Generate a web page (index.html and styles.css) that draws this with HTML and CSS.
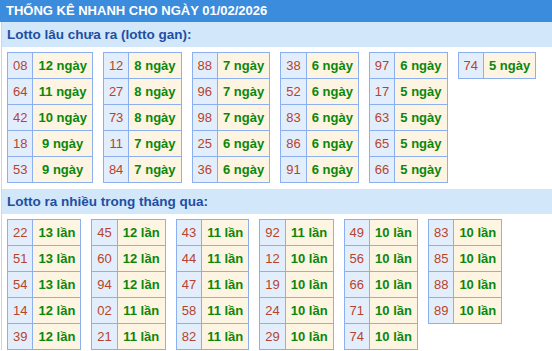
FILE: index.html
```html
<!DOCTYPE html>
<html lang="vi">
<head>
<meta charset="utf-8">
<title>Thống kê nhanh</title>
<link rel="stylesheet" href="styles.css">
</head>
<body>
<div class="page">
  <div class="header">THỐNG KÊ NHANH CHO NGÀY 01/02/2026</div>
  <div class="content">
    <div class="section-title">Lotto lâu chưa ra (lotto gan):</div>
    <div class="tables tables-top">
      <table class="lt">
        <tr><td class="num">08</td><td class="val">12 ngày</td></tr>
        <tr><td class="num">64</td><td class="val">11 ngày</td></tr>
        <tr><td class="num">42</td><td class="val">10 ngày</td></tr>
        <tr><td class="num">18</td><td class="val">9 ngày</td></tr>
        <tr><td class="num">53</td><td class="val">9 ngày</td></tr>
      </table>
      <table class="lt">
        <tr><td class="num">12</td><td class="val">8 ngày</td></tr>
        <tr><td class="num">27</td><td class="val">8 ngày</td></tr>
        <tr><td class="num">73</td><td class="val">8 ngày</td></tr>
        <tr><td class="num">11</td><td class="val">7 ngày</td></tr>
        <tr><td class="num">84</td><td class="val">7 ngày</td></tr>
      </table>
      <table class="lt">
        <tr><td class="num">88</td><td class="val">7 ngày</td></tr>
        <tr><td class="num">96</td><td class="val">7 ngày</td></tr>
        <tr><td class="num">98</td><td class="val">7 ngày</td></tr>
        <tr><td class="num">25</td><td class="val">6 ngày</td></tr>
        <tr><td class="num">36</td><td class="val">6 ngày</td></tr>
      </table>
      <table class="lt">
        <tr><td class="num">38</td><td class="val">6 ngày</td></tr>
        <tr><td class="num">52</td><td class="val">6 ngày</td></tr>
        <tr><td class="num">83</td><td class="val">6 ngày</td></tr>
        <tr><td class="num">86</td><td class="val">6 ngày</td></tr>
        <tr><td class="num">91</td><td class="val">6 ngày</td></tr>
      </table>
      <table class="lt">
        <tr><td class="num">97</td><td class="val">6 ngày</td></tr>
        <tr><td class="num">17</td><td class="val">5 ngày</td></tr>
        <tr><td class="num">63</td><td class="val">5 ngày</td></tr>
        <tr><td class="num">65</td><td class="val">5 ngày</td></tr>
        <tr><td class="num">66</td><td class="val">5 ngày</td></tr>
      </table>
      <table class="lt">
        <tr><td class="num">74</td><td class="val">5 ngày</td></tr>
      </table>
    </div>
    <div class="section-title">Lotto ra nhiều trong tháng qua:</div>
    <div class="tables">
      <table class="lt">
        <tr><td class="num">22</td><td class="val">13 lần</td></tr>
        <tr><td class="num">51</td><td class="val">13 lần</td></tr>
        <tr><td class="num">54</td><td class="val">13 lần</td></tr>
        <tr><td class="num">14</td><td class="val">12 lần</td></tr>
        <tr><td class="num">39</td><td class="val">12 lần</td></tr>
      </table>
      <table class="lt">
        <tr><td class="num">45</td><td class="val">12 lần</td></tr>
        <tr><td class="num">60</td><td class="val">12 lần</td></tr>
        <tr><td class="num">94</td><td class="val">12 lần</td></tr>
        <tr><td class="num">02</td><td class="val">11 lần</td></tr>
        <tr><td class="num">21</td><td class="val">11 lần</td></tr>
      </table>
      <table class="lt">
        <tr><td class="num">43</td><td class="val">11 lần</td></tr>
        <tr><td class="num">44</td><td class="val">11 lần</td></tr>
        <tr><td class="num">47</td><td class="val">11 lần</td></tr>
        <tr><td class="num">58</td><td class="val">11 lần</td></tr>
        <tr><td class="num">82</td><td class="val">11 lần</td></tr>
      </table>
      <table class="lt">
        <tr><td class="num">92</td><td class="val">11 lần</td></tr>
        <tr><td class="num">12</td><td class="val">10 lần</td></tr>
        <tr><td class="num">19</td><td class="val">10 lần</td></tr>
        <tr><td class="num">24</td><td class="val">10 lần</td></tr>
        <tr><td class="num">29</td><td class="val">10 lần</td></tr>
      </table>
      <table class="lt">
        <tr><td class="num">49</td><td class="val">10 lần</td></tr>
        <tr><td class="num">56</td><td class="val">10 lần</td></tr>
        <tr><td class="num">66</td><td class="val">10 lần</td></tr>
        <tr><td class="num">71</td><td class="val">10 lần</td></tr>
        <tr><td class="num">74</td><td class="val">10 lần</td></tr>
      </table>
      <table class="lt">
        <tr><td class="num">83</td><td class="val">10 lần</td></tr>
        <tr><td class="num">85</td><td class="val">10 lần</td></tr>
        <tr><td class="num">88</td><td class="val">10 lần</td></tr>
        <tr><td class="num">89</td><td class="val">10 lần</td></tr>
      </table>
    </div>
  </div>
</div>
</body>
</html>
```

FILE: styles.css
```css
html, body {
  margin: 0;
  padding: 0;
  background: #ffffff;
}

body {
  font-family: "Liberation Sans", Arial, sans-serif;
  font-size: 13px;
}

.page {
  width: 552px;
  overflow: hidden;
}

.header {
  height: 22px;
  line-height: 22px;
  background: #3b8cdd;
  color: #ffffff;
  font-weight: bold;
  font-size: 13px;
  padding-left: 6px;
  white-space: nowrap;
}

.content {
  margin-left: 1px;
  border-left: 1px solid #cfd6de;
}

.section-title {
  height: 25px;
  line-height: 25px;
  background: #d3e7fb;
  color: #1d4fa2;
  font-weight: bold;
  font-size: 13.5px;
  padding-left: 5px;
  white-space: nowrap;
}

.tables {
  display: flex;
  align-items: flex-start;
  gap: 10px;
  padding: 5px 0 0 5px;
}

.tables-top {
  padding-bottom: 6px;
}

.lt {
  border-collapse: collapse;
}

.lt td {
  border: 1px solid #8cb0ef;
  padding: 0 5px;
  height: 25px;
  line-height: 25px;
  text-align: center;
  white-space: nowrap;
  font-size: 13px;
}

.lt .num {
  background: #e3eefc;
  color: #b8432b;
  font-weight: normal;
}

.lt .val {
  background: #fef4e2;
  color: #0b870b;
  font-weight: bold;
}
```
